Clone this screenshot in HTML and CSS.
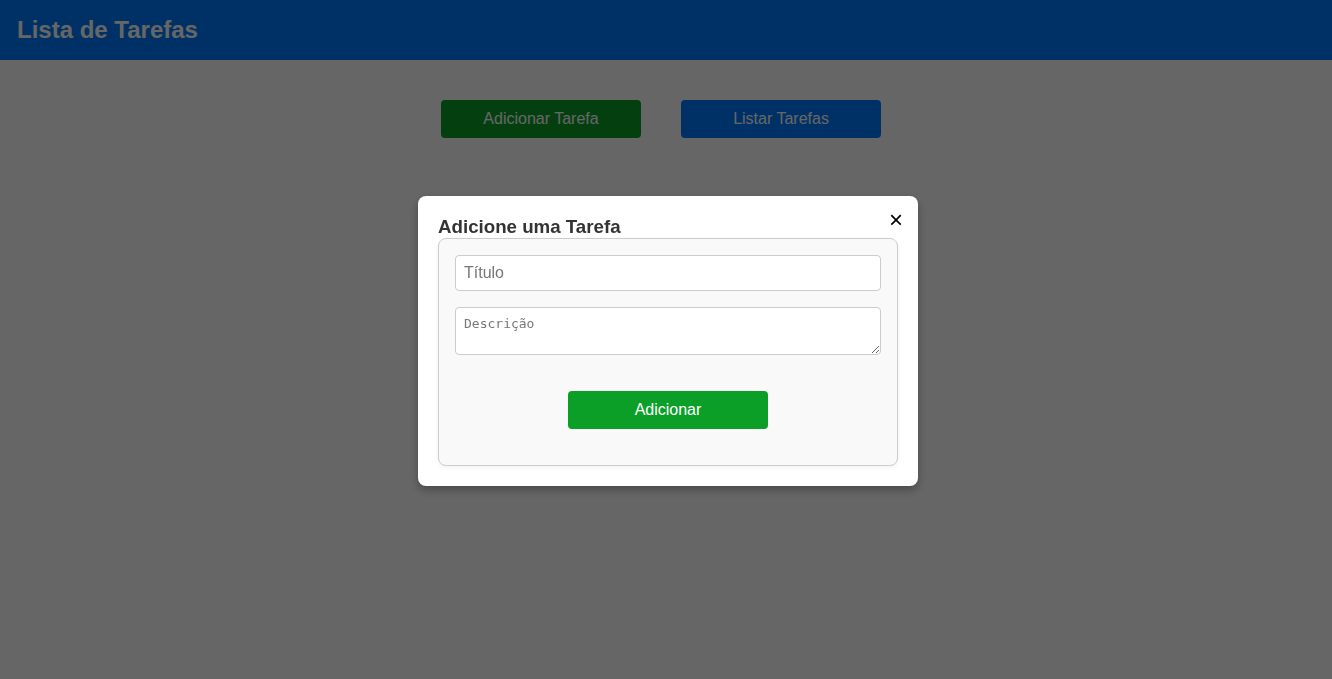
FILE: index.html
```html
<!DOCTYPE html>
<html lang="pt">
<head>
<meta charset="utf-8">
<title>Lista de Tarefas</title>
<link rel="stylesheet" href="styles.css">
</head>
<body>
<header class="topbar">
  <h1 class="topbar-title">Lista de Tarefas</h1>
</header>
<main class="actions">
  <button class="btn btn-green">Adicionar Tarefa</button>
  <button class="btn btn-blue">Listar Tarefas</button>
</main>
<div class="overlay">
  <div class="modal">
    <button class="modal-close" aria-label="Fechar">&times;</button>
    <h3 class="modal-title">Adicione uma Tarefa</h3>
    <form class="task-form">
      <input class="field field-input" type="text" placeholder="Título">
      <textarea class="field field-textarea" placeholder="Descrição"></textarea>
      <div class="form-actions">
        <button type="button" class="btn btn-green btn-submit">Adicionar</button>
      </div>
    </form>
  </div>
</div>
</body>
</html>
```

FILE: styles.css
```css
* { box-sizing: border-box; }

html, body {
  margin: 0;
  padding: 0;
  height: 100%;
}

body {
  font-family: "Liberation Sans", Arial, sans-serif;
  background: #ffffff;
  color: #333;
}

.topbar {
  height: 60px;
  background: #007bff;
  display: flex;
  align-items: center;
  padding: 0 17px;
}

.topbar-title {
  margin: 0;
  color: #ffffff;
  font-size: 24px;
  font-weight: bold;
}

.actions {
  display: flex;
  justify-content: center;
  gap: 40px;
  padding: 40px 10px 0 0;
}

.btn {
  width: 200px;
  height: 38px;
  border: none;
  border-radius: 4px;
  color: #ffffff;
  font-family: "Liberation Sans", Arial, sans-serif;
  font-size: 16px;
  cursor: pointer;
}

.btn-green { background: #0b9f28; }
.btn-blue { background: #007bff; }

.overlay {
  position: fixed;
  inset: 0;
  background: rgba(0, 0, 0, 0.6);
  display: flex;
  align-items: center;
  justify-content: center;
  padding-left: 4px;
  padding-top: 3px;
}

.modal {
  position: relative;
  width: 500px;
  background: #ffffff;
  border-radius: 8px;
  padding: 20px;
  box-shadow: 0 4px 10px rgba(0, 0, 0, 0.3);
}

.modal-close {
  position: absolute;
  top: 12px;
  right: 15px;
  border: none;
  background: none;
  padding: 0;
  font-family: "Liberation Sans", Arial, sans-serif;
  font-size: 24px;
  line-height: 24px;
  color: #000;
  cursor: pointer;
}

.modal-title {
  margin: 0;
  font-size: 18.72px;
  line-height: 22px;
  font-weight: bold;
  color: #333;
}

.task-form {
  background: #f9f9f9;
  border: 1px solid #ccc;
  border-radius: 8px;
  padding: 16px 16px 36px;
  display: flex;
  flex-direction: column;
  box-shadow: 0 2px 4px rgba(0, 0, 0, 0.05);
}

.field {
  width: 100%;
  border: 1px solid #ccc;
  border-radius: 4px;
  background: #ffffff;
  padding: 8px;
}

.field-input {
  height: 36px;
  font-family: "Liberation Sans", Arial, sans-serif;
  font-size: 16px;
  color: #333;
}

.field-input::placeholder { color: #777; }

.field-textarea {
  margin-top: 16px;
  height: 48px;
  font-family: "DejaVu Sans Mono", monospace;
  font-size: 13px;
  color: #333;
  resize: vertical;
}

.field-textarea::placeholder { color: #777; }

.form-actions {
  display: flex;
  justify-content: center;
  margin-top: 36px;
}
```
